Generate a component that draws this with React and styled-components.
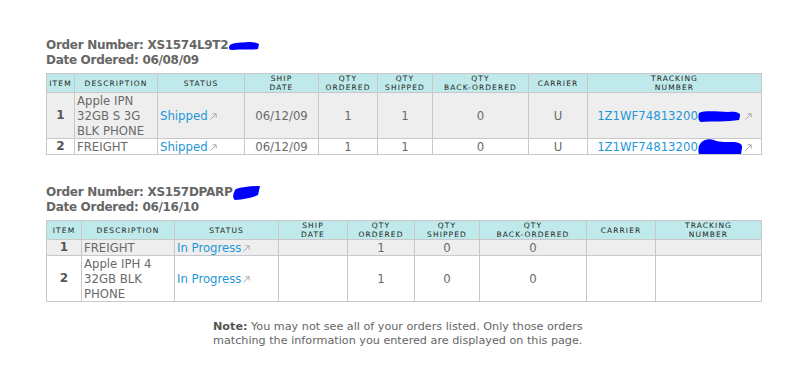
import React from "react";
import styled, { createGlobalStyle } from "styled-components";

const GlobalStyle = createGlobalStyle`
    body {
        margin: 0;
        background: #ffffff;
    }
`;

const Page = styled.div`
    width: 796px;
    padding-top: 38px;
    font-family: "DejaVu Sans", Verdana, sans-serif;
`;

const OrderBlock = styled.section`
    margin-left: 46px;
    width: 715px;
    margin-bottom: 30px;
`;

const OrderMeta = styled.div`
    font-family: "DejaVu Sans", Verdana, sans-serif;
    font-weight: bold;
    font-size: 12px;
    letter-spacing: -0.3px;
    line-height: 15px;
    color: #666666;
    margin-bottom: 5px;
`;

const Grid = styled.table`
    width: 715px;
    table-layout: fixed;
    border-collapse: collapse;
`;

const HeadCell = styled.th`
    background-color: #bfe9ea;
    border: 1px solid #c8c8c8;
    height: 17px;
    padding: 0;
    font-family: "DejaVu Sans", Verdana, sans-serif;
    font-size: 7.5px;
    font-weight: normal;
    letter-spacing: 1.1px;
    line-height: 9px;
    text-transform: uppercase;
    color: #1e1e1e;
    text-align: center;
    vertical-align: middle;
`;

const Row = styled.tr`
    background-color: ${({ shaded }) => (shaded ? "#eeeeee" : "#ffffff")};
`;

const Cell = styled.td`
    border: 1px solid #c8c8c8;
    padding: 0 ${({ left }) => (left ? "2px" : "0")};
    font-family: "DejaVu Sans Condensed", "DejaVu Sans", Tahoma, sans-serif;
    font-size: 13px;
    line-height: 15px;
    color: #6a6a6a;
    text-align: ${({ left }) => (left ? "left" : "center")};
    vertical-align: middle;
    height: ${({ tall }) => (tall ? "44px" : "14px")};
    white-space: nowrap;
    overflow: hidden;
`;

const ItemCell = styled(Cell)`
    font-family: "DejaVu Sans", Verdana, sans-serif;
    font-weight: bold;
    font-size: 12px;
    color: #555555;
`;

const Desc = styled.div`
    white-space: normal;
`;

const LinkText = styled.a`
    color: #1f97d6;
    text-decoration: none;
    white-space: nowrap;
`;

const Arrow = styled.svg`
    width: 7px;
    height: 7px;
    margin-left: 2px;
    vertical-align: 0px;
`;

const Blot = styled.svg`
    display: inline-block;
    vertical-align: middle;
    margin: -4px 0;
`;

const Note = styled.p`
    width: 378px;
    margin: -12px auto 0;
    padding-left: 8px;
    font-family: "DejaVu Sans", Verdana, sans-serif;
    font-size: 11.2px;
    line-height: 14px;
    color: #666666;
    b {
        color: #555555;
    }
`;

const ExtArrow = () => (
    <Arrow viewBox="0 0 7 7" fill="none" stroke="#a8a8a8" strokeWidth="1">
        <path d="M0.5 6.5 L6 1" />
        <path d="M2.5 0.8 H6.2 V4.5" />
    </Arrow>
);

// marker scribbles over the hidden digits
const blots = {
    flat: "M2 4 C6 1 14 2 20 1 C26 1 30 2 31 3 L30 8 C24 9 14 8 4 9 C1 9 0 7 2 4 Z",
    slant: "M4 3 C10 1 20 0 28 0 L26 9 C20 12 12 13 3 14 C0 13 1 6 4 3 Z",
    track: "M1 3 C8 0 20 2 30 2 C38 1 43 3 42 6 L41 10 C30 12 14 11 3 12 C0 11 0 6 1 3 Z",
    bump: "M1 7 C3 2 9 -1 16 1 C20 3 26 3 34 3 C41 3 45 5 44 9 L43 15 C32 18 14 18 3 17 C0 16 0 11 1 7 Z",
};

const Redacted = ({ shape, w, h }) => (
    <Blot width={w} height={h} viewBox={`0 0 ${w} ${h}`}>
        <path d={blots[shape]} fill="#0000ff" />
    </Blot>
);

const Status = ({ children }) => (
    <LinkText href="#">
        {children}
        <ExtArrow />
    </LinkText>
);

const Tracking = ({ number, shape, h }) => (
    <LinkText href="#">
        {number}
        <Redacted shape={shape} w={45} h={h} />
        <ExtArrow />
    </LinkText>
);

const headers = [
    "Item",
    "Description",
    "Status",
    ["Ship", "Date"],
    ["Qty", "Ordered"],
    ["Qty", "Shipped"],
    ["Qty", "Back-Ordered"],
    "Carrier",
    ["Tracking", "Number"],
];

const HeadRow = () => (
    <tr>
        {headers.map((h, i) => (
            <HeadCell key={i}>
                {Array.isArray(h) ? (
                    <>
                        {h[0]}
                        <br />
                        {h[1]}
                    </>
                ) : (
                    h
                )}
            </HeadCell>
        ))}
    </tr>
);

const Columns = ({ widths }) => (
    <colgroup>
        {widths.map((w, i) => (
            <col key={i} style={{ width: w }} />
        ))}
    </colgroup>
);

const App = () => (
    <>
        <GlobalStyle />
        <Page>
            <OrderBlock>
                <OrderMeta>
                    Order Number: XS1574L9T2
                    <Redacted shape="flat" w={32} h={10} />
                    <br />
                    Date Ordered: 06/08/09
                </OrderMeta>
                <Grid>
                    <Columns widths={[28, 83, 87, 74, 59, 55, 96, 59, 174]} />
                    <thead>
                        <HeadRow />
                    </thead>
                    <tbody>
                        <Row shaded>
                            <ItemCell tall>1</ItemCell>
                            <Cell left>
                                <Desc>Apple IPN 32GB S 3G BLK PHONE</Desc>
                            </Cell>
                            <Cell left>
                                <Status>Shipped</Status>
                            </Cell>
                            <Cell>06/12/09</Cell>
                            <Cell>1</Cell>
                            <Cell>1</Cell>
                            <Cell>0</Cell>
                            <Cell>U</Cell>
                            <Cell>
                                <Tracking number="1Z1WF74813200" shape="track" h={13} />
                            </Cell>
                        </Row>
                        <Row>
                            <ItemCell>2</ItemCell>
                            <Cell left>FREIGHT</Cell>
                            <Cell left>
                                <Status>Shipped</Status>
                            </Cell>
                            <Cell>06/12/09</Cell>
                            <Cell>1</Cell>
                            <Cell>1</Cell>
                            <Cell>0</Cell>
                            <Cell>U</Cell>
                            <Cell>
                                <Tracking number="1Z1WF74813200" shape="bump" h={18} />
                            </Cell>
                        </Row>
                    </tbody>
                </Grid>
            </OrderBlock>

            <OrderBlock>
                <OrderMeta>
                    Order Number: XS157DPARP
                    <Redacted shape="slant" w={28} h={14} />
                    <br />
                    Date Ordered: 06/16/10
                </OrderMeta>
                <Grid>
                    <Columns widths={[35, 93, 104, 69, 67, 65, 107, 69, 106]} />
                    <thead>
                        <HeadRow />
                    </thead>
                    <tbody>
                        <Row shaded>
                            <ItemCell>1</ItemCell>
                            <Cell left>FREIGHT</Cell>
                            <Cell left>
                                <Status>In Progress</Status>
                            </Cell>
                            <Cell />
                            <Cell>1</Cell>
                            <Cell>0</Cell>
                            <Cell>0</Cell>
                            <Cell />
                            <Cell />
                        </Row>
                        <Row>
                            <ItemCell tall>2</ItemCell>
                            <Cell left>
                                <Desc>Apple IPH 4 32GB BLK PHONE</Desc>
                            </Cell>
                            <Cell left>
                                <Status>In Progress</Status>
                            </Cell>
                            <Cell />
                            <Cell>1</Cell>
                            <Cell>0</Cell>
                            <Cell>0</Cell>
                            <Cell />
                            <Cell />
                        </Row>
                    </tbody>
                </Grid>
            </OrderBlock>

            <Note>
                <b>Note:</b> You may not see all of your orders listed. Only those orders
                matching the information you entered are displayed on this page.
            </Note>
        </Page>
    </>
);

export default App;
